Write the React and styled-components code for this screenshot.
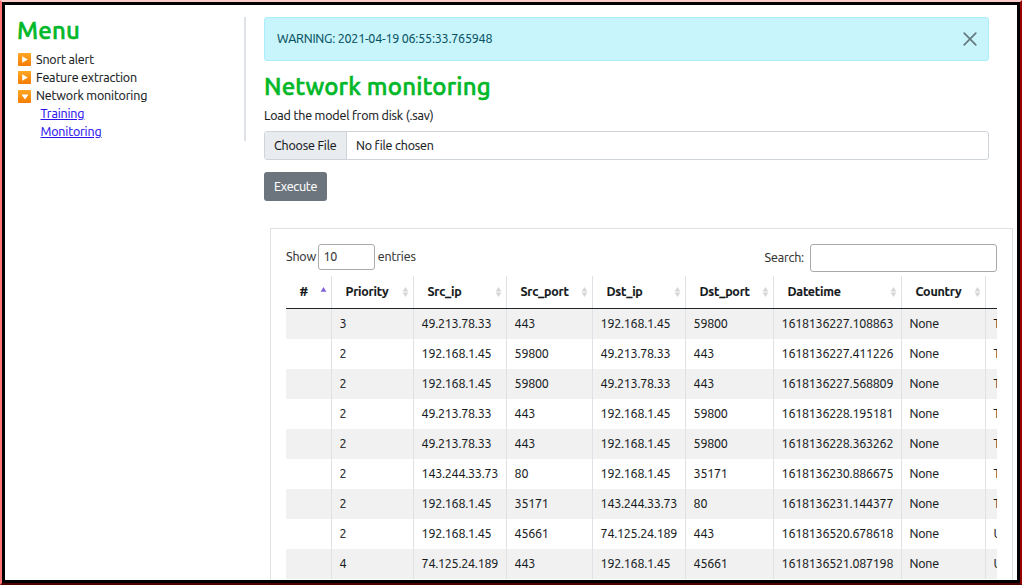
import React from 'react';
import styled, { createGlobalStyle } from 'styled-components';

const GlobalStyle = createGlobalStyle`
  * { box-sizing: border-box; }
  html, body { margin: 0; overflow: hidden; background: #fff; }
  body {
    font: 12.5px/18px Ubuntu, "Noto Sans", sans-serif;
    letter-spacing: -0.17px;
    color: #16191c;
    -webkit-text-stroke-width: 0.12px;
  }
`;

const Frame = styled.div`
  width: 1022px;
  height: 585px;
  border: 2px solid;
  border-color: #ffcccc #990000 #4d0000 #ff7373;
`;

const Page = styled.div`
  display: flex;
  height: 100%;
  border: 3px solid #000;
  padding: 12px 0 0 12px;
  overflow: hidden;
  background: #fff;
`;

const Sidebar = styled.nav`
  flex: none;
  width: 229px;
  height: 124px;
  border-right: 2px solid #dee2e6;
`;

const Title = styled.h1`
  margin: 0;
  font-size: 24px;
  line-height: 28px;
  font-weight: 500;
  letter-spacing: 0.18px;
  -webkit-text-stroke: 0.55px #00b828;
  color: #00b828;
  white-space: nowrap;
`;

const MenuList = styled.div`
  padding-top: 5px;
`;

const MenuItem = styled.div`
  display: flex;
  align-items: center;
  gap: 4px;
  height: 18px;
  padding-left: 1px;

  svg {
    margin-top: ${(p) => (p.$open ? 2 : 0)}px;
  }
`;

const MenuLink = styled.a`
  display: block;
  width: max-content;
  height: 18px;
  margin-left: 23.5px;
  color: #2a12f0;
  text-decoration: underline;
`;

const Main = styled.main`
  flex: none;
  width: 749px;
  padding-left: 18px;
`;

const Alert = styled.div`
  display: flex;
  align-items: center;
  justify-content: space-between;
  width: 725px;
  height: 44px;
  padding: 0 11px 0 12px;
  border: 1px solid #a9eefa;
  border-radius: 3px;
  background: #c8f4fc;
  color: #055160;
  letter-spacing: -0.22px;
`;

const AlertText = styled.span`
  padding-bottom: 2px;
`;

const FormTitle = styled(Title)`
  margin-top: 12px;
`;

const Label = styled.label`
  display: block;
  margin-top: 5px;
`;

const FileField = styled.div`
  display: flex;
  width: 725px;
  height: 29px;
  margin-top: 7px;
  border: 1px solid #ced4da;
  border-radius: 3px;
  line-height: 26px;
  overflow: hidden;
`;

const FileButton = styled.span`
  width: 82px;
  padding-left: 9px;
  border-right: 1px solid #ced4da;
  background: #e9ecef;
`;

const FileName = styled.span`
  padding-left: 9px;
`;

const Execute = styled.button`
  display: block;
  width: 63px;
  height: 29px;
  margin-top: 12px;
  padding: 0 0 2px;
  border: 0;
  border-radius: 3px;
  background: #6c757d;
  color: #fff;
  font: inherit;
  letter-spacing: -0.25px;
`;

const Panel = styled.section`
  width: 743px;
  height: 400px;
  margin: 27px 0 0 6px;
  padding: 15px 15px 0;
  border: 1px solid #dee2e6;
`;

const Controls = styled.div`
  display: flex;
  justify-content: space-between;
  height: 32px;
  color: #333;
`;

const Control = styled.label`
  display: flex;
  align-items: center;
  gap: ${(p) => p.$gap}px;
  height: ${(p) => p.$height}px;
`;

const ControlText = styled.span`
  padding-bottom: 2px;
`;

const Input = styled.input`
  width: ${(p) => p.$width}px;
  height: ${(p) => p.$height}px;
  padding: 0 4px 2px;
  border: 1px solid #aaa;
  border-radius: 3px;
  background: #fff;
  color: #333;
  font: inherit;
  letter-spacing: -0.2px;
`;

const Table = styled.div`
  width: 711px;
  overflow: hidden;
`;

const Row = styled.div`
  display: grid;
  grid-template-columns: 46px 82px 93px 86px 93px 88px 128px 84px 90px;
  width: 790px;
  height: 30px;
  line-height: 29px;
  letter-spacing: -0.25px;
  background: ${(p) => (p.$shaded ? '#f1f1f1' : '#fff')};
`;

const HeadRow = styled(Row)`
  height: 33px;
  border-bottom: 1px solid #212529;
  font-weight: 700;
`;

const Cell = styled.div`
  padding-left: 7.6px;
  border-right: 1px solid #dee2e6;
  white-space: nowrap;
`;

const HeadCell = styled(Cell)`
  display: flex;
  align-items: center;
  justify-content: space-between;
  padding: 0 4px 0 13.5px;
`;

const HeadText = styled.span`
  padding-bottom: 2px;
`;

const ToggleIcon = ({ open }) => (
  <svg width="14" height="13" viewBox="0 0 14 13">
    <defs>
      <linearGradient id="orange" x1="0" y1="0" x2="0" y2="1">
        <stop offset="0" stopColor="#ffa726" />
        <stop offset="1" stopColor="#f57c00" />
      </linearGradient>
    </defs>
    <rect x="0" y="0" width="13" height="13" rx="0.8" fill="url(#orange)" />
    <path d={open ? 'M3.5 4.5h7L7 9.5z' : 'M4.2 3.2v6.6l5.6-3.3z'} fill="#fff" />
  </svg>
);

const CloseIcon = () => (
  <svg width="14" height="14" viewBox="0 0 14 14">
    <path d="M1.2 1.2l11.6 11.6M12.8 1.2L1.2 12.8" stroke="#657a7e" strokeWidth="1.7" strokeLinecap="round" />
  </svg>
);

const SortIcon = ({ active }) => (
  <svg width="7" height="12" viewBox="0 0 7 12">
    {active ? (
      <path d="M3.5 1L6.4 5.8H0.6z" fill="#8262d9" />
    ) : (
      <path d="M3.5 1L6.4 5.5H0.6zM3.5 11L6.4 6.5H0.6z" fill="#d6d6d6" />
    )}
  </svg>
);

const columns = ['#', 'Priority', 'Src_ip', 'Src_port', 'Dst_ip', 'Dst_port', 'Datetime', 'Country'];

const rows = [
  ['3', '49.213.78.33', '443', '192.168.1.45', '59800', '1618136227.108863', 'None', 'TCP'],
  ['2', '192.168.1.45', '59800', '49.213.78.33', '443', '1618136227.411226', 'None', 'TCP'],
  ['2', '192.168.1.45', '59800', '49.213.78.33', '443', '1618136227.568809', 'None', 'TCP'],
  ['2', '49.213.78.33', '443', '192.168.1.45', '59800', '1618136228.195181', 'None', 'TCP'],
  ['2', '49.213.78.33', '443', '192.168.1.45', '59800', '1618136228.363262', 'None', 'TCP'],
  ['2', '143.244.33.73', '80', '192.168.1.45', '35171', '1618136230.886675', 'None', 'TCP'],
  ['2', '192.168.1.45', '35171', '143.244.33.73', '80', '1618136231.144377', 'None', 'TCP'],
  ['2', '192.168.1.45', '45661', '74.125.24.189', '443', '1618136520.678618', 'None', 'UDP'],
  ['4', '74.125.24.189', '443', '192.168.1.45', '45661', '1618136521.087198', 'None', 'UDP'],
];

export default function App() {
  return (
    <>
      <GlobalStyle />
      <Frame>
        <Page>
          <Sidebar>
            <Title>Menu</Title>
            <MenuList>
              <MenuItem><ToggleIcon />Snort alert</MenuItem>
              <MenuItem><ToggleIcon />Feature extraction</MenuItem>
              <MenuItem $open><ToggleIcon open />Network monitoring</MenuItem>
              <MenuLink>Training</MenuLink>
              <MenuLink>Monitoring</MenuLink>
            </MenuList>
          </Sidebar>
          <Main>
            <Alert>
              <AlertText>WARNING: 2021-04-19 06:55:33.765948</AlertText>
              <CloseIcon />
            </Alert>
            <FormTitle>Network monitoring</FormTitle>
            <Label>Load the model from disk (.sav)</Label>
            <FileField>
              <FileButton>Choose File</FileButton>
              <FileName>No file chosen</FileName>
            </FileField>
            <Execute>Execute</Execute>
            <Panel>
              <Controls>
                <Control $gap={2.4} $height={26}>
                  <ControlText>Show</ControlText>
                  <Input $width={57} $height={26} defaultValue="10" />
                  <ControlText>entries</ControlText>
                </Control>
                <Control $gap={6} $height={28}>
                  <ControlText>Search:</ControlText>
                  <Input $width={187} $height={28} />
                </Control>
              </Controls>
              <Table>
                <HeadRow>
                  {columns.map((name, i) => (
                    <HeadCell key={name}>
                      <HeadText>{name}</HeadText>
                      <SortIcon active={i === 0} />
                    </HeadCell>
                  ))}
                </HeadRow>
                {rows.map((row, i) => (
                  <Row key={i} $shaded={i % 2 === 0}>
                    <Cell />
                    {row.map((value, j) => (
                      <Cell key={j}>{value}</Cell>
                    ))}
                  </Row>
                ))}
              </Table>
            </Panel>
          </Main>
        </Page>
      </Frame>
    </>
  );
}
